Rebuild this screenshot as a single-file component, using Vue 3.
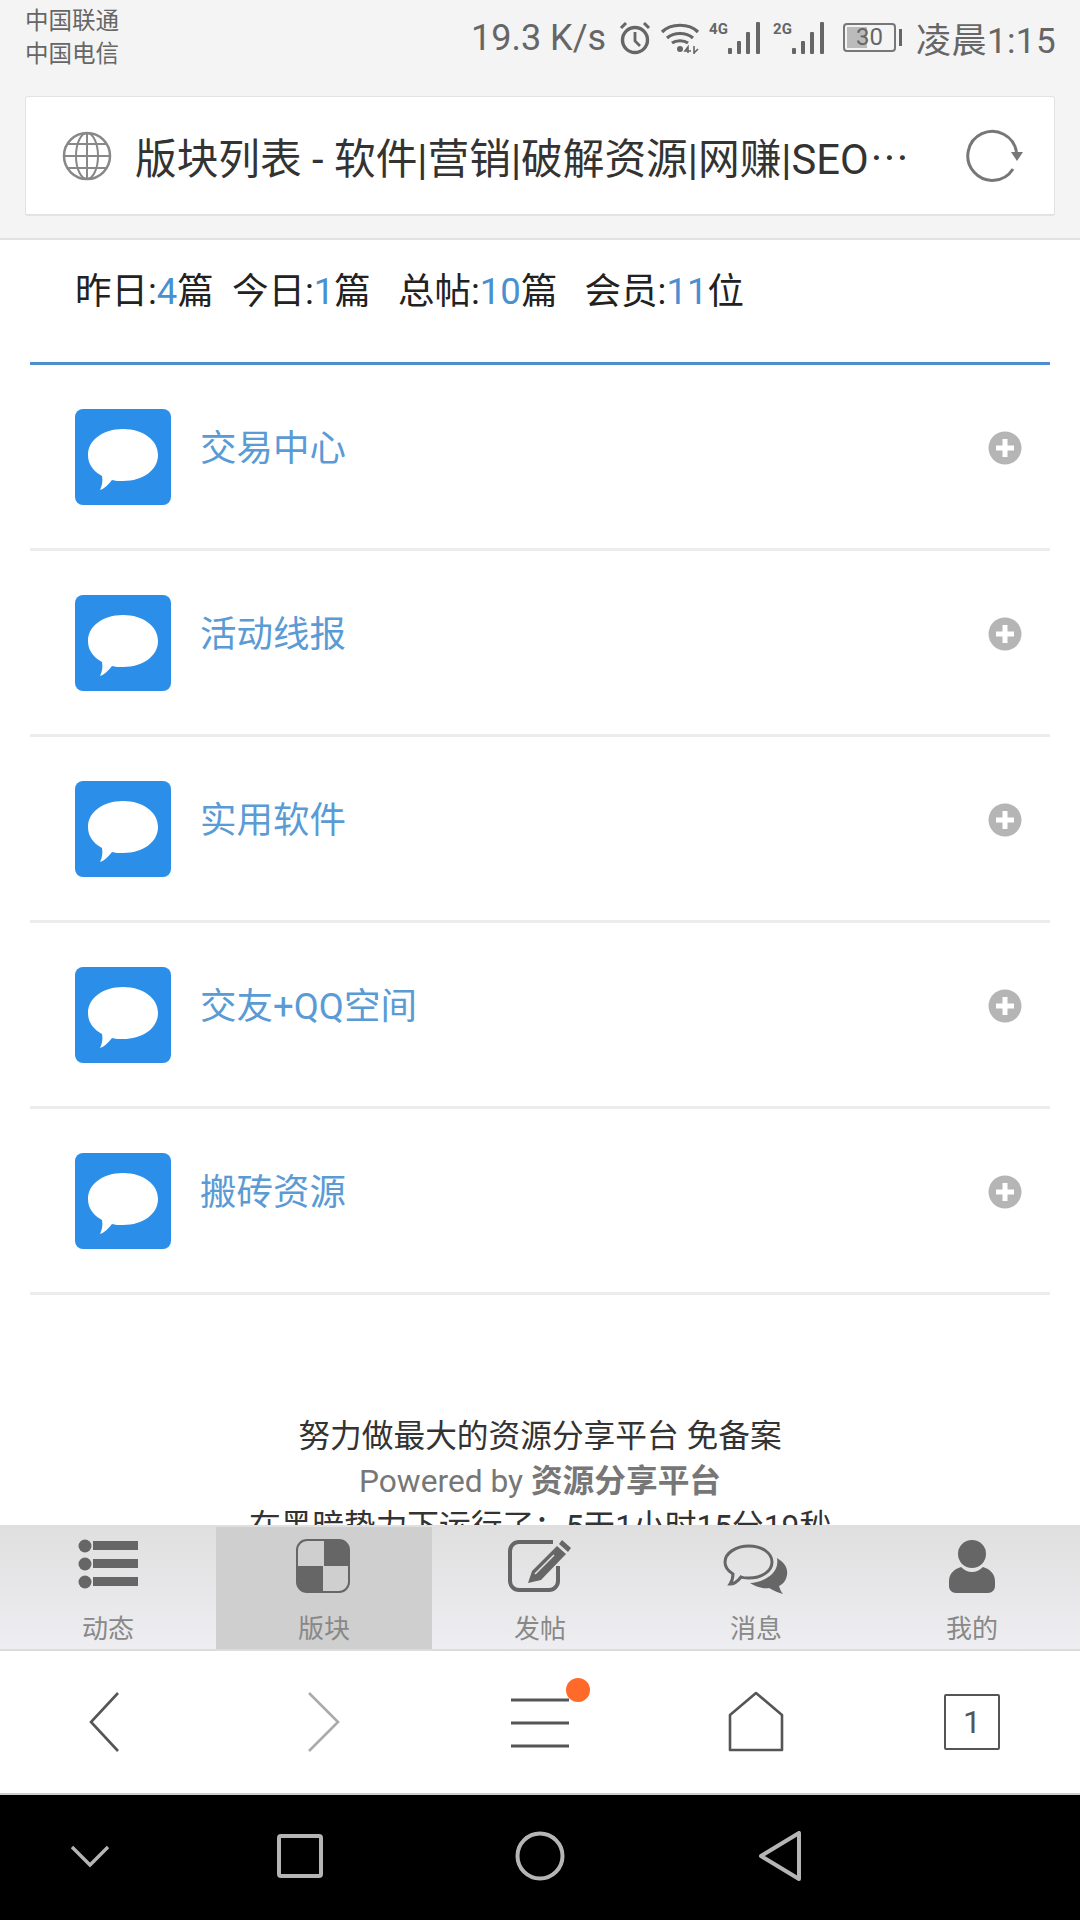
<template>
  <div class="phone">
    <header class="top">
      <div class="status">
        <div class="carriers">
          <div>中国联通</div>
          <div>中国电信</div>
        </div>
        <div class="status-right">
          <span class="speed">19.3 K/s</span>
          <svg class="ic-clock" width="34" height="34" viewBox="0 0 34 34" fill="none" stroke="#666" stroke-width="3.4">
            <circle cx="17" cy="19" r="12.5" />
            <path d="M17 11v9l5 5" stroke-width="2.8" />
            <path d="M3 7l5-5M31 7l-5-5" stroke-width="3" />
          </svg>
          <svg class="ic-wifi" width="40" height="34" viewBox="0 0 40 34" fill="none" stroke="#666" stroke-width="3.2">
            <path d="M2 11C11 2 29 2 38 11M7 17c7-6 19-6 26 0M12 22c4-3 12-3 16 0" />
            <circle cx="20" cy="28" r="3" fill="#666" stroke="none" />
            <path d="M28 32v-6l-3 4h6M34 25v8M38 28l-4 4" stroke-width="1.6" />
          </svg>
          <span class="sig">
            <span class="sig-label">4G</span>
            <svg width="36" height="34" viewBox="0 0 36 34" fill="#666">
              <rect x="1" y="27" width="4" height="6" rx="1" />
              <rect x="10" y="20" width="4" height="13" rx="1" />
              <rect x="19" y="11" width="4" height="22" rx="1" />
              <rect x="29" y="1" width="4" height="32" rx="1" />
            </svg>
          </span>
          <span class="sig">
            <span class="sig-label">2G</span>
            <svg width="36" height="34" viewBox="0 0 36 34" fill="#666">
              <rect x="1" y="27" width="4" height="6" rx="1" />
              <rect x="10" y="20" width="4" height="13" rx="1" />
              <rect x="19" y="11" width="4" height="22" rx="1" />
              <rect x="29" y="1" width="4" height="32" rx="1" />
            </svg>
          </span>
          <span class="battery">
            <span class="battery-fill"></span>
            <span class="battery-num">30</span>
            <span class="battery-nub"></span>
          </span>
          <span class="time">凌晨1:15</span>
        </div>
      </div>
      <div class="urlbar">
        <svg width="50" height="50" viewBox="0 0 50 50" fill="none" stroke="#888" stroke-width="2">
          <circle cx="25" cy="25" r="23" stroke-width="2.5" />
          <ellipse cx="25" cy="25" rx="11" ry="23" />
          <path d="M25 2v46M2 25h46M6 13h38M6 37h38" />
        </svg>
        <span class="page-title">版块列表 - 软件|营销|破解资源|网赚|SEO<span class="dots">···</span></span>
        <svg class="reload" width="62" height="54" viewBox="-4 0 62 54" fill="none" stroke="#777" stroke-width="3">
          <path d="M44 40A24.5 24.5 0 1 1 47.5 23" />
          <path d="M42 23h12l-6 9z" fill="#777" stroke="none" />
        </svg>
      </div>
    </header>

    <main class="content">
      <p class="stats">
        昨日:<b>4</b>篇&nbsp;&nbsp;今日:<b>1</b>篇&nbsp;&nbsp;&nbsp;总帖:<b>10</b>篇&nbsp;&nbsp;&nbsp;会员:<b>11</b>位
      </p>
      <ul class="boards">
        <li v-for="name in boards" :key="name" class="board">
          <svg class="board-icon" width="96" height="96" viewBox="0 0 96 96">
            <rect width="96" height="96" rx="8" fill="#2b8fea" />
            <path fill="#fff" d="M48 20C68 20 83 31 83 46C83 61 68 72 48 72C44 72 40 72 37 71C33 76 29 80 25 81C27 77 28 72 27 67C18 62 13 55 13 46C13 31 28 20 48 20Z" />
          </svg>
          <span class="board-name">{{ name }}</span>
          <svg class="plus" width="34" height="34" viewBox="0 0 34 34">
            <circle cx="17" cy="17" r="16.5" fill="#b5b5b5" />
            <path d="M17 8v18M8 17h18" stroke="#fff" stroke-width="5" />
          </svg>
        </li>
      </ul>
      <footer class="foot">
        <div>努力做最大的资源分享平台 免备案</div>
        <div class="powered">Powered by <b>资源分享平台</b></div>
        <div>在黑暗势力下运行了：5天1小时15分19秒</div>
      </footer>
    </main>

    <nav class="tabs">
      <a v-for="tab in tabs" :key="tab.label" class="tab" :class="{ active: tab.active }">
        <svg width="66" height="58" viewBox="0 0 66 58" v-html="tab.icon"></svg>
        <span>{{ tab.label }}</span>
      </a>
    </nav>

    <div class="browser-bar">
      <svg width="60" height="62" viewBox="0 0 60 62" fill="none" stroke="#555" stroke-width="2.6">
        <path d="M40 2L13 31l27 29" />
      </svg>
      <svg width="60" height="62" viewBox="0 0 60 62" fill="none" stroke="#aaa" stroke-width="2.6">
        <path d="M15 2l29 29-29 29" />
      </svg>
      <div class="menu-btn">
        <svg width="60" height="62" viewBox="0 0 60 62" fill="none" stroke="#555" stroke-width="3">
          <path d="M1 9h58M1 32h58M1 55h58" />
        </svg>
        <span class="dot"></span>
      </div>
      <svg width="60" height="62" viewBox="0 0 60 62" fill="none" stroke="#555" stroke-width="2.6">
        <path d="M4 24L30 2l26 22v35H4z" stroke-linejoin="round" />
      </svg>
      <div class="tab-count">1</div>
    </div>

    <div class="sys-bar">
      <svg width="40" height="24" viewBox="0 0 40 24" fill="none" stroke="#b5b5b5" stroke-width="3.4">
        <path d="M2 3l18 18L38 3" />
      </svg>
      <svg width="46" height="46" viewBox="0 0 46 46" fill="none" stroke="#b5b5b5" stroke-width="4">
        <rect x="2" y="3" width="42" height="40" rx="2" />
      </svg>
      <svg width="50" height="50" viewBox="0 0 50 50" fill="none" stroke="#b5b5b5" stroke-width="4">
        <circle cx="25" cy="25" r="22.5" />
      </svg>
      <svg width="44" height="50" viewBox="0 0 44 50" fill="none" stroke="#b5b5b5" stroke-width="4" stroke-linejoin="round">
        <path d="M41 2v46L3 25z" />
      </svg>
    </div>
  </div>
</template>

<script setup>
const boards = ['交易中心', '活动线报', '实用软件', '交友+QQ空间', '搬砖资源']

const tabs = [
  {
    label: '动态',
    icon: '<g fill="#666"><circle cx="10" cy="8" r="6.5"/><circle cx="10" cy="26" r="6.5"/><circle cx="10" cy="44" r="6.5"/><rect x="18" y="3" width="45" height="9"/><rect x="18" y="21" width="45" height="9"/><rect x="18" y="39" width="45" height="9"/></g>'
  },
  {
    label: '版块',
    active: true,
    icon: '<rect x="6" y="2" width="52" height="52" rx="10" fill="none" stroke="#666" stroke-width="2"/><path fill="#666" d="M33 2h15a10 10 0 0 1 10 10v16H33zM6 28h26v26H16A10 10 0 0 1 6 44z"/>'
  },
  {
    label: '发帖',
    icon: '<path d="M46 4H12a9 9 0 0 0-9 9v30a9 9 0 0 0 9 9h30a9 9 0 0 0 9-9V28" fill="none" stroke="#666" stroke-width="4"/><path fill="#666" d="M55 2l9 8-3 4-9-8zM50 8l9 8-25 26-13 3 4-12z"/><path d="M47 17L28 36" stroke="#e4e4e6" stroke-width="1.6"/>'
  },
  {
    label: '消息',
    icon: '<path d="M26 8C39 8 49 15 49 24C49 33 39 40 26 40C23 40 20 40 18 39C15 43 11 46 7 46C9 43 10 39 10 36C5 33 2 29 2 24C2 15 13 8 26 8Z" fill="none" stroke="#666" stroke-width="3"/><path fill="#666" d="M54 20C62 25 65 30 64 37C63 43 60 46 56 48C57 51 58 54 60 56C56 55 51 53 46 50C40 51 33 49 27 45C40 44 57 36 54 20Z"/>'
  },
  {
    label: '我的',
    icon: '<g fill="#666"><ellipse cx="33" cy="16" rx="14" ry="14"/><path d="M22 29c3 3 7 5 11 5s8-2 11-5c7 2 12 7 12 14v5c0 4-3 7-7 7H17c-4 0-7-3-7-7v-5c0-7 5-12 12-14z"/></g>'
  }
]
</script>

<style>
html,
body {
  margin: 0;
  background: #fff;
}
</style>

<style scoped>
.phone {
  width: 1080px;
  height: 1920px;
  display: flex;
  flex-direction: column;
  overflow: hidden;
  font-family: Roboto, "Noto Sans CJK SC", sans-serif;
  color: #222;
  background: #fff;
}

.top {
  height: 240px;
  flex: none;
  box-sizing: border-box;
  background: #f4f4f4;
  border-bottom: 2px solid #e2e2e2;
}

.status {
  height: 96px;
  box-sizing: border-box;
  display: flex;
  justify-content: space-between;
  padding: 5px 24px 0 25px;
}

.carriers {
  font-size: 23.5px;
  line-height: 33px;
  color: #666;
}

.status-right {
  height: 65px;
  display: flex;
  align-items: center;
  color: #666;
}

.speed {
  font-size: 36px;
  margin-right: 12px;
}

.ic-wifi {
  margin-left: 8px;
  margin-right: 9px;
}

.sig {
  display: flex;
  align-items: flex-start;
  margin-right: 10px;
}

.sig-label {
  width: 18px;
  font-size: 15px;
  line-height: 16px;
  font-weight: 700;
}

.battery {
  position: relative;
  width: 53px;
  height: 29px;
  box-sizing: border-box;
  border: 2px solid #777;
  border-radius: 4px;
  margin: 0 20px 0 6px;
}

.battery-fill {
  position: absolute;
  left: 2px;
  top: 2px;
  bottom: 2px;
  width: 20px;
  background: #bbb;
}

.battery-num {
  position: absolute;
  left: 0;
  right: 0;
  top: -2px;
  text-align: center;
  font-size: 24px;
  line-height: 29px;
}

.battery-nub {
  position: absolute;
  left: 54px;
  top: 4px;
  width: 3px;
  height: 17px;
  background: #666;
}

.time {
  font-size: 35px;
  letter-spacing: 0.4px;
}

.urlbar {
  height: 120px;
  margin: 0 25px;
  box-sizing: border-box;
  display: flex;
  align-items: center;
  padding: 0 27px 0 36px;
  background: #fff;
  border: 1px solid #e3e3e3;
  border-bottom-width: 2px;
  border-radius: 3px;
}

.page-title {
  flex: 1;
  margin-left: 23px;
  font-size: 41.7px;
  color: #333;
  white-space: nowrap;
}

.dots {
  font-size: 44px;
  letter-spacing: 1.5px;
  margin-left: 2px;
}

.content {
  height: 1285px;
  flex: none;
  overflow: hidden;
}

.stats {
  margin: 0 30px;
  padding: 27px 0 0 45px;
  height: 125px;
  box-sizing: border-box;
  font-size: 36.5px;
  line-height: 50px;
  border-bottom: 3px solid #4a90d0;
}

.stats b {
  font-weight: 400;
  color: #4a90d0;
}

.boards {
  list-style: none;
  margin: 0 30px;
  padding: 0;
}

.board {
  height: 186px;
  box-sizing: border-box;
  display: flex;
  align-items: flex-start;
  padding: 44px 28px 0 45px;
  border-bottom: 3px solid #ececec;
}

.board-name {
  flex: 1;
  margin-left: 29px;
  font-size: 36.5px;
  line-height: 50px;
  margin-top: -20px;
  padding-top: 35px;
  color: #5a9bd5;
}

.plus {
  margin-top: 22px;
}

.foot {
  padding-top: 119px;
  text-align: center;
  font-size: 31.7px;
  line-height: 45px;
  color: #333;
}

.powered {
  color: #777;
}

.powered b {
  font-weight: 700;
}

.tabs {
  height: 126px;
  flex: none;
  box-sizing: border-box;
  display: grid;
  grid-template-columns: repeat(5, 216px);
  padding-top: 2px;
  background: linear-gradient(#dfdfdf, #eeeef2);
  border-bottom: 2px solid #dcdcdc;
}

.tab {
  display: flex;
  flex-direction: column;
  align-items: center;
  padding-top: 11px;
  color: #888;
  font-size: 26px;
  line-height: 32px;
}

.tab svg {
  margin-bottom: 17px;
}

.tab.active {
  background: #cfcfcf;
}

.browser-bar {
  height: 144px;
  flex: none;
  box-sizing: border-box;
  display: grid;
  grid-template-columns: repeat(5, 216px);
  justify-items: center;
  align-items: center;
  background: #fff;
  border-bottom: 2px solid #ccc;
}

.menu-btn {
  position: relative;
  display: flex;
}

.dot {
  position: absolute;
  left: 56px;
  top: -13px;
  width: 24px;
  height: 24px;
  border-radius: 50%;
  background: #ff6a2b;
}

.tab-count {
  width: 56px;
  height: 56px;
  box-sizing: border-box;
  border: 2px solid #555;
  border-radius: 2px;
  text-align: center;
  font-size: 32px;
  line-height: 52px;
  color: #555;
}

.sys-bar {
  height: 125px;
  flex: none;
  box-sizing: border-box;
  padding-bottom: 3px;
  display: grid;
  grid-template-columns: 180px 240px 240px 240px;
  justify-items: center;
  align-items: center;
  background: #000;
}
</style>
